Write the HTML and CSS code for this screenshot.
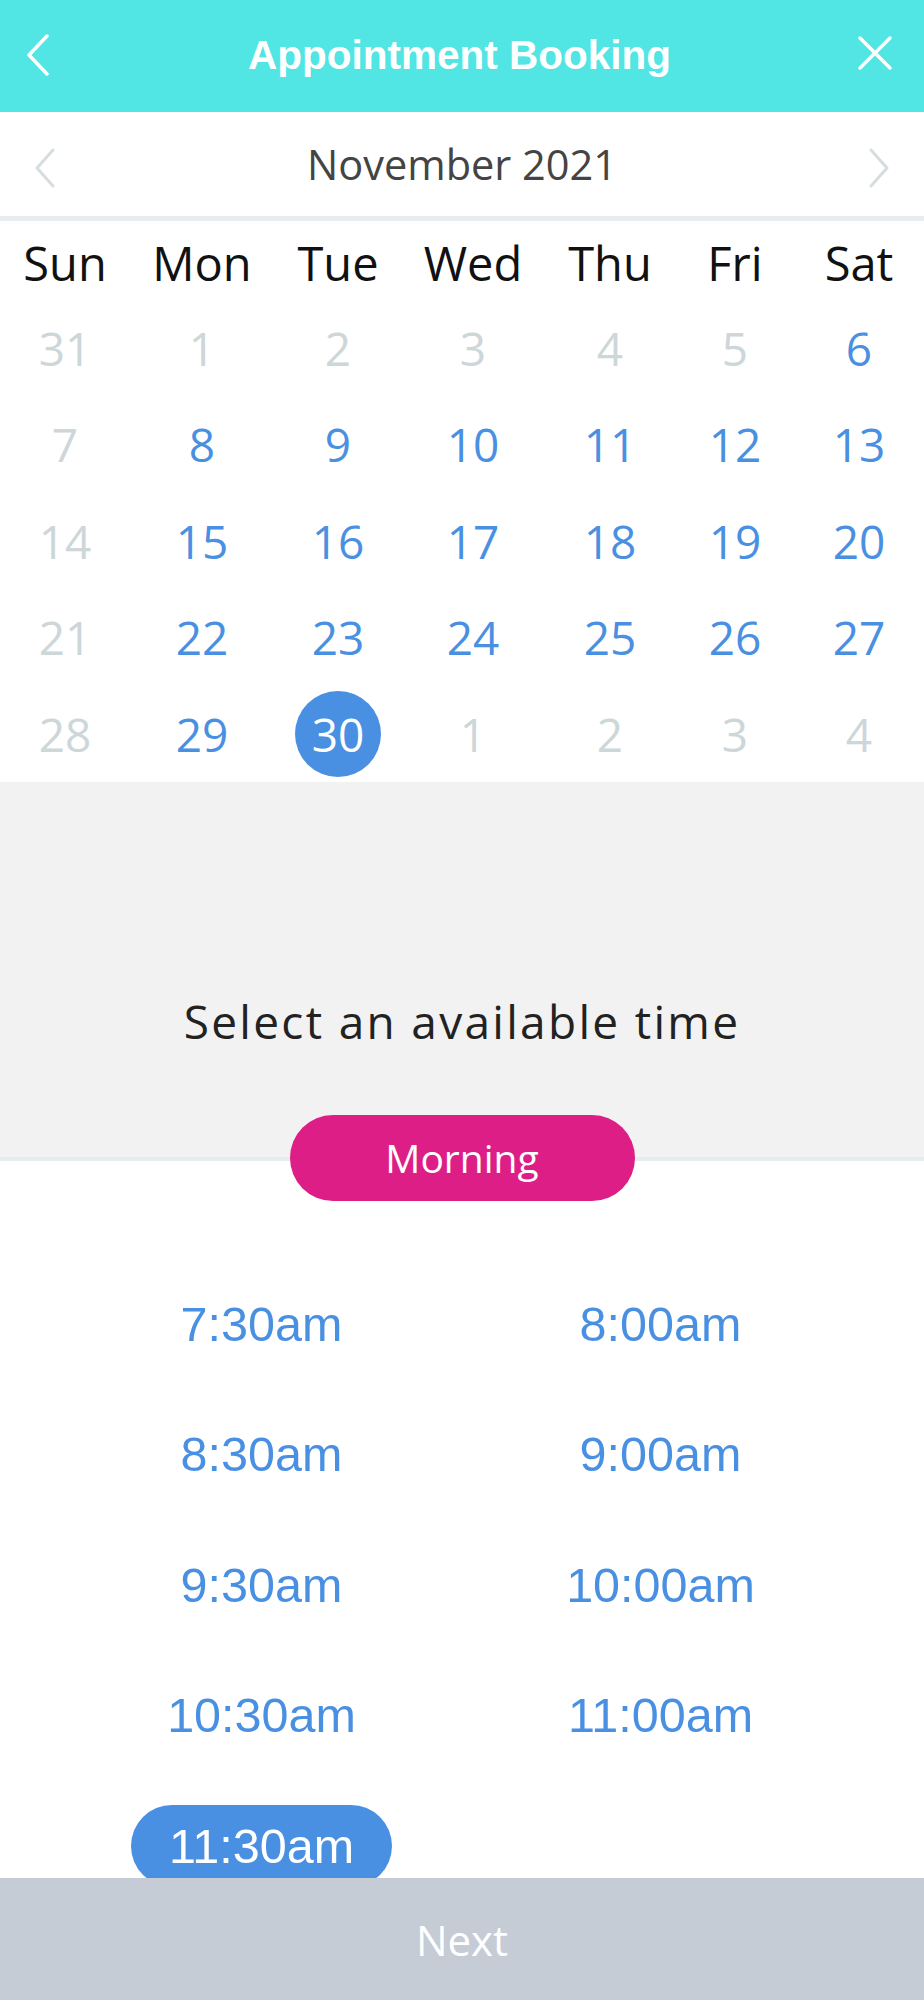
FILE: index.html
```html
<!DOCTYPE html>
<html lang="en">
<head>
  <meta charset="UTF-8" />
  <meta name="viewport" content="width=device-width, initial-scale=1.0" />
  <title>Appointment Booking</title>
  <link rel="stylesheet" href="styles.css">
</head>
<body>
  <header class="topbar">
    <button class="icon-btn back" aria-label="Back">
      <svg width="24" height="42" viewBox="0 0 24 42"><path d="M21 2 L3 21 L21 40" /></svg>
    </button>
    <h1>Appointment Booking</h1>
    <button class="icon-btn close" aria-label="Close">
      <svg width="36" height="36" viewBox="0 0 36 36"><path d="M3 3 L33 33 M33 3 L3 33" /></svg>
    </button>
  </header>

  <div class="month-bar">
    <span class="month-nav prev">
      <svg width="22" height="40" viewBox="0 0 22 40"><path d="M19 2 L3 20 L19 38" /></svg>
    </span>
    <span class="month-label">November 2021</span>
    <span class="month-nav next">
      <svg width="22" height="40" viewBox="0 0 22 40"><path d="M3 2 L19 20 L3 38" /></svg>
    </span>
  </div>

  <div class="calendar">
    <div class="weekday">Sun</div>
    <div class="weekday">Mon</div>
    <div class="weekday">Tue</div>
    <div class="weekday">Wed</div>
    <div class="weekday">Thu</div>
    <div class="weekday">Fri</div>
    <div class="weekday">Sat</div>

    <div class="day off">31</div>
    <div class="day off">1</div>
    <div class="day off">2</div>
    <div class="day off">3</div>
    <div class="day off">4</div>
    <div class="day off">5</div>
    <div class="day">6</div>

    <div class="day off">7</div>
    <div class="day">8</div>
    <div class="day">9</div>
    <div class="day">10</div>
    <div class="day">11</div>
    <div class="day">12</div>
    <div class="day">13</div>

    <div class="day off">14</div>
    <div class="day">15</div>
    <div class="day">16</div>
    <div class="day">17</div>
    <div class="day">18</div>
    <div class="day">19</div>
    <div class="day">20</div>

    <div class="day off">21</div>
    <div class="day">22</div>
    <div class="day">23</div>
    <div class="day">24</div>
    <div class="day">25</div>
    <div class="day">26</div>
    <div class="day">27</div>

    <div class="day off">28</div>
    <div class="day">29</div>
    <div class="day"><span class="selected">30</span></div>
    <div class="day off">1</div>
    <div class="day off">2</div>
    <div class="day off">3</div>
    <div class="day off">4</div>
  </div>

  <section class="time-intro">
    <p>Select an available time</p>
  </section>
  <div class="period">
    <span class="period-pill">Morning</span>
  </div>

  <div class="slots">
    <div class="slot"><span>7:30am</span></div>
    <div class="slot"><span>8:00am</span></div>
    <div class="slot"><span>8:30am</span></div>
    <div class="slot"><span>9:00am</span></div>
    <div class="slot"><span>9:30am</span></div>
    <div class="slot"><span>10:00am</span></div>
    <div class="slot"><span>10:30am</span></div>
    <div class="slot"><span>11:00am</span></div>
    <div class="slot"><span class="active">11:30am</span></div>
  </div>

  <footer class="next-bar">Next</footer>
</body>
</html>
```

FILE: styles.css
```css
:root {
  --turquoise: #51e5e4;
  --blue: #4a90e2;
  --magenta: #dc1e86;
  --muted: #cdd6d8;
  --line: #e7ecee;
}
body {
  margin: 0;
  font-family: 'Open Sans', sans-serif;
  background: #fff;
}
.topbar {
  height: 112px;
  box-sizing: border-box;
  padding: 0 31px 2px 26px;
  background: var(--turquoise);
  display: grid;
  grid-template-columns: 1fr auto 1fr;
  align-items: center;
}
.topbar h1 {
  margin: 0;
  font-family: 'Liberation Sans', Arial, sans-serif;
  font-weight: 700;
  font-size: 40.5px;
  color: #fff;
}
.icon-btn {
  background: none;
  border: none;
  padding: 0;
  display: flex;
}
.icon-btn svg path {
  fill: none;
  stroke: #fff;
  stroke-width: 3.5;
  stroke-linecap: round;
  stroke-linejoin: round;
}
.close {
  justify-self: end;
  margin-top: -4px;
}
.month-bar {
  height: 104px;
  padding: 0 34px;
  border-bottom: 5px solid var(--line);
  display: grid;
  grid-template-columns: 1fr auto 1fr;
  align-items: center;
}
.month-nav {
  display: flex;
  margin-top: 8px;
}
.month-nav.next {
  justify-content: flex-end;
}
.month-nav svg path {
  fill: none;
  stroke: #d6dddf;
  stroke-width: 3;
  stroke-linecap: round;
  stroke-linejoin: round;
}
.month-label {
  font-size: 41.5px;
  color: #444;
}
.calendar {
  display: grid;
  grid-template-columns: 130px 144px 128px 142px 132px 118px 130px;
  grid-template-rows: 78px;
  grid-auto-rows: 96.5px;
}
.weekday {
  display: flex;
  align-items: center;
  justify-content: center;
  padding-top: 5px;
  font-size: 47px;
  color: #111;
}
.day {
  display: flex;
  align-items: center;
  justify-content: center;
  padding-top: 1px;
  font-size: 46px;
  color: var(--blue);
}
.day.off {
  color: var(--muted);
}
.selected {
  width: 86px;
  height: 86px;
  border-radius: 50%;
  background: var(--blue);
  color: #fff;
  display: flex;
  align-items: center;
  justify-content: center;
}
.time-intro {
  background: #f2f2f2;
  padding: 208px 0 105px;
  border-bottom: 4px solid var(--line);
}
.time-intro p {
  margin: 0;
  text-align: center;
  font-size: 46px;
  line-height: 62px;
  letter-spacing: 2.3px;
  color: #222;
}
.period {
  display: flex;
  justify-content: center;
  margin-top: -46px;
  position: relative;
  z-index: 1;
}
.period-pill {
  width: 345px;
  height: 86px;
  border-radius: 43px;
  background: var(--magenta);
  color: #fff;
  font-size: 39px;
  display: flex;
  align-items: center;
  justify-content: center;
}
.slots {
  display: grid;
  grid-template-columns: 399px 399px;
  grid-auto-rows: 130.5px;
  padding: 58px 0 0 62px;
}
.slot {
  display: flex;
  align-items: center;
  justify-content: center;
  font-family: 'Liberation Sans', Arial, sans-serif;
  font-size: 48.5px;
  color: var(--blue);
}
.slot .active {
  width: 261px;
  height: 82px;
  border-radius: 41px;
  background: var(--blue);
  color: #fff;
  display: flex;
  align-items: center;
  justify-content: center;
}
.next-bar {
  position: fixed;
  left: 0;
  right: 0;
  bottom: 0;
  height: 122px;
  background: #c5ccd6;
  color: #fff;
  font-size: 42px;
  display: flex;
  align-items: center;
  justify-content: center;
}
```
